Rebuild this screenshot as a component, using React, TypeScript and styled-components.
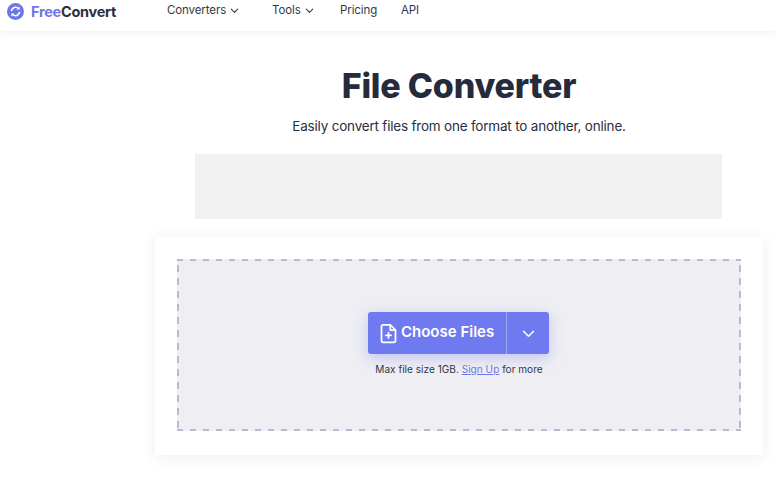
import React from "react";
import styled, { createGlobalStyle } from "styled-components";

const Global = createGlobalStyle`
  html, body { margin: 0; padding: 0; background: #fff; }
  body { font-family: Inter, "Noto Sans", sans-serif; color: #252b3b; }
  #root { width: 776px; height: 493px; overflow: hidden; }
`;

const Page = styled.div`
  display: flex;
  flex-direction: column;
  width: 776px;
  height: 493px;
  overflow: hidden;
  background: #fff;
`;

const Header = styled.header`
  display: flex;
  align-items: flex-start;
  box-sizing: border-box;
  height: 31px;
  flex: none;
  padding: 3px 0 0 7px;
  background: #fff;
  box-shadow: 0 2px 10px rgba(30, 30, 50, 0.06);
`;

const Logo = styled.div`
  display: flex;
  align-items: center;
  gap: 7px;
  width: 160px;
  flex: none;
  font-size: 14.5px;
  line-height: 17px;
  font-weight: 700;
  letter-spacing: -0.28px;
  color: #2a2f3d;
`;

const LogoAccent = styled.span`
  color: #6f76e8;
`;

const Nav = styled.nav`
  display: flex;
  align-items: center;
  font-size: 11.5px;
  line-height: 14px;
  font-weight: 400;
  letter-spacing: -0.1px;
  color: #333846;
`;

const NavItem = styled.span<{ $width: number }>`
  display: flex;
  align-items: center;
  gap: 3px;
  width: ${(p) => p.$width}px;
`;

const Main = styled.main`
  display: flex;
  flex-direction: column;
  align-items: center;
  padding-left: 142px;
`;

const Title = styled.h1`
  margin: 35px 0 0;
  font-size: 34px;
  line-height: 40px;
  font-weight: 800;
  letter-spacing: -0.2px;
  white-space: nowrap;
  color: #252b3b;
`;

const Subtitle = styled.p`
  margin: 11px 0 0;
  font-size: 13.5px;
  line-height: 18px;
  letter-spacing: -0.2px;
  white-space: nowrap;
  color: #2b3040;
`;

const AdSlot = styled.div`
  width: 527px;
  height: 65px;
  margin: 19px 1px 0 0;
  background: #f1f1f1;
`;

const Card = styled.section`
  box-sizing: border-box;
  flex: none;
  width: 608px;
  height: 218px;
  margin-top: 18px;
  padding: 22px;
  background: #fff;
  box-shadow: 0 2px 14px rgba(40, 40, 70, 0.08);
`;

const Drop = styled.div`
  box-sizing: border-box;
  width: 564px;
  height: 172px;
  display: flex;
  flex-direction: column;
  align-items: center;
  padding-top: 53px;
  background:
    linear-gradient(90deg, #bdb8d4 50%, transparent 50%) 0 0 / 13px 2px repeat-x,
    linear-gradient(90deg, #bdb8d4 50%, transparent 50%) 0 100% / 13px 2px repeat-x,
    linear-gradient(0deg, #bdb8d4 50%, transparent 50%) 0 0 / 2px 13px repeat-y,
    linear-gradient(0deg, #bdb8d4 50%, transparent 50%) 100% 0 / 2px 13px repeat-y,
    #eeeef3;
`;

const SplitButton = styled.div`
  display: flex;
  width: 181px;
  height: 42px;
  flex: none;
  margin-right: 1px;
  border-radius: 3px;
  background: #6f79f0;
  color: #fff;
  box-shadow: 0 4px 14px rgba(111, 121, 240, 0.35);
`;

const MainAction = styled.div`
  flex: 1;
  display: flex;
  align-items: center;
  gap: 2px;
  padding-left: 10px;
  font-size: 15px;
  font-weight: 600;
`;

const ActionLabel = styled.span`
  margin-top: -3px;
  white-space: nowrap;
`;

const Caret = styled.div`
  width: 42px;
  flex: none;
  display: flex;
  align-items: center;
  justify-content: center;
  border-left: 1px solid rgba(255, 255, 255, 0.35);
`;

const Note = styled.p`
  margin: 8px 0 0;
  font-size: 10.1px;
  line-height: 14px;
  white-space: nowrap;
  color: #333846;
`;

const NoteLink = styled.a`
  color: #6f79e8;
  text-decoration: underline;
`;

const Chevron = ({ size, width }: { size: number; width: number }) => (
  <svg width={size} height={size} viewBox="0 0 24 24" fill="none" stroke="currentColor" strokeWidth={width} strokeLinecap="round" strokeLinejoin="round">
    <path d="M5 9l7 7 7-7" />
  </svg>
);

export default function App() {
  return (
    <Page>
      <Global />
      <Header>
        <Logo>
          <svg width="17" height="17" viewBox="0 0 19 19">
            <circle cx="9.5" cy="9.5" r="9.5" fill="#6f76e8" />
            <path d="M5 9a4.6 4.6 0 0 1 8-2.6M14 10a4.6 4.6 0 0 1-8 2.6" fill="none" stroke="#fff" strokeWidth="1.7" />
            <path d="M14.2 3.8v3.6h-3.6zM4.8 15.2v-3.6h3.6z" fill="#fff" />
          </svg>
          <span>
            <LogoAccent>Free</LogoAccent>Convert
          </span>
        </Logo>
        <Nav>
          <NavItem $width={105}>
            Converters <Chevron size={11} width={2.4} />
          </NavItem>
          <NavItem $width={68}>
            Tools <Chevron size={11} width={2.4} />
          </NavItem>
          <NavItem $width={61}>Pricing</NavItem>
          <NavItem $width={30}>API</NavItem>
        </Nav>
      </Header>
      <Main>
        <Title>File Converter</Title>
        <Subtitle>Easily convert files from one format to another, online.</Subtitle>
        <AdSlot />
        <Card>
          <Drop>
            <SplitButton>
              <MainAction>
                <svg width="21" height="21" viewBox="0 0 24 24" fill="none" stroke="currentColor" strokeWidth="2" strokeLinecap="round" strokeLinejoin="round">
                  <path d="M14 2H6a2 2 0 0 0-2 2v16a2 2 0 0 0 2 2h12a2 2 0 0 0 2-2V8z" />
                  <path d="M14 2v6h6M12 11v6M9 14h6" />
                </svg>
                <ActionLabel>Choose Files</ActionLabel>
              </MainAction>
              <Caret>
                <Chevron size={17} width={2} />
              </Caret>
            </SplitButton>
            <Note>
              Max file size 1GB. <NoteLink>Sign Up</NoteLink> for more
            </Note>
          </Drop>
        </Card>
      </Main>
    </Page>
  );
}
